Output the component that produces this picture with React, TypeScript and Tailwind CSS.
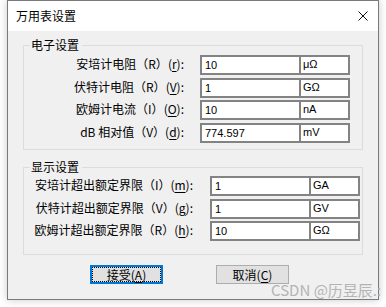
import React from 'react';

const cjk = "font-['Microsoft_YaHei','Noto_Sans_CJK_SC',sans-serif]";
const latin = "font-['Liberation_Sans','Noto_Sans_CJK_SC',sans-serif]";

interface Row {
  label: React.ReactNode;
  value: string;
  unit: string;
}

const Key = ({ k }: { k: string }) => (
  <span>
    (<span className="underline underline-offset-[2px]">{k}</span>):
  </span>
);

const electronRows: Row[] = [
  { label: <>安培计电阻（R）<Key k="r" /></>, value: '10', unit: 'μΩ' },
  { label: <>伏特计电阻（R）<Key k="V" /></>, value: '1', unit: 'GΩ' },
  { label: <>欧姆计电流（I）<Key k="O" /></>, value: '10', unit: 'nA' },
  { label: <>dB 相对值（V）<Key k="d" /></>, value: '774.597', unit: 'mV' },
];

const displayRows: Row[] = [
  { label: <>安培计超出额定界限（I）<Key k="m" /></>, value: '1', unit: 'GA' },
  { label: <>伏特计超出额定界限（V）<Key k="g" /></>, value: '1', unit: 'GV' },
  { label: <>欧姆计超出额定界限（R）<Key k="h" /></>, value: '10', unit: 'GΩ' },
];

const Field = ({ row, labelW, gap, mt }: { row: Row; labelW: string; gap: string; mt: string }) => (
  <div className={`flex items-center h-[20px] ${mt}`}>
    <div className={`${labelW} text-right text-[12px] leading-[14px] text-black ${cjk} -mt-[2px]`}>{row.label}</div>
    <div className={`flex ${gap}`}>
      <div className={`w-[101px] h-[20px] border-2 border-[#838383] bg-white pl-[3px] text-[11px] leading-[16px] text-black ${latin}`}>
        {row.value}
      </div>
      <div className={`w-[51px] h-[20px] -ml-[2px] border-2 border-[#838383] bg-white pl-[2px] text-[11px] leading-[14px] text-black ${latin}`}>
        {row.unit}
      </div>
    </div>
  </div>
);

const GroupBox = ({ title, children, className }: { title: string; children: React.ReactNode; className?: string }) => (
  <fieldset className={`border border-[#dcdcdc] ${className ?? ''}`}>
    <legend className={`ml-[6px] pl-[1px] pr-[3px] text-[12px] leading-[12px] text-black ${cjk}`}>{title}</legend>
    {children}
  </fieldset>
);

export default function App() {
  const mts = ['mt-[4px]', 'mt-[3px]', 'mt-[2px]', 'mt-[3px]'];
  const mts2 = ['mt-[3px]', 'mt-[3px]', 'mt-[2px]'];

  return (
    <div className="w-[386px] h-[307px] bg-white relative overflow-hidden">
      <div className="ml-[7px] w-[372px] h-[300px] border border-[#7a7a7a] bg-[#f0f0f0] shadow-[0_0_8px_rgba(0,0,0,0.22)] flex flex-col">
        {/* title bar */}
        <div className="h-[30px] bg-white flex items-center justify-between pl-[8px] pr-[10px] shrink-0">
          <span className={`text-[12px] leading-[14px] text-black ${cjk}`}>万用表设置</span>
          <svg width="10" height="10" viewBox="0 0 10 10">
            <path d="M0.5 0.5 L9.5 9.5 M9.5 0.5 L0.5 9.5" stroke="#111" strokeWidth="1" />
          </svg>
        </div>

        <div className="px-[15px] pt-[8px] flex flex-col">
          <GroupBox title="电子设置" className="pb-[6px]">
            {electronRows.map((r, i) => (
              <Field key={i} row={r} labelW="w-[160px]" gap="ml-[16px]" mt={mts[i]} />
            ))}
          </GroupBox>

          <GroupBox title="显示设置" className="mt-[11px] pb-[13px]">
            {displayRows.map((r, i) => (
              <Field key={i} row={r} labelW="w-[169px]" gap="ml-[17px]" mt={mts2[i]} />
            ))}
          </GroupBox>

          <div className="flex mt-[10px]">
            <button
              type="button"
              className={`ml-[67px] w-[73px] h-[19px] border-2 border-[#0078d7] bg-[#e1e1e1] p-0 flex`}
            >
              <span className={`flex-1 border border-dotted border-black flex items-center justify-center text-[12px] leading-[13px] text-black ${cjk}`}>
                接受(<span className="underline underline-offset-[2px]">A</span>)
              </span>
            </button>
            <button
              type="button"
              className={`ml-[53px] w-[73px] h-[19px] border border-[#adadad] bg-[#e1e1e1] flex items-center justify-center text-[12px] leading-[13px] text-black ${cjk}`}
            >
              取消(<span className="underline underline-offset-[2px]">C</span>)
            </button>
          </div>
        </div>
      </div>

      {/* watermark */}
      <div className={`absolute left-[271px] top-[281px] text-[15px] leading-[18px] text-[#b4b4b4] whitespace-nowrap ${cjk}`}>
        CSDN @历昱辰.:
      </div>
    </div>
  );
}
